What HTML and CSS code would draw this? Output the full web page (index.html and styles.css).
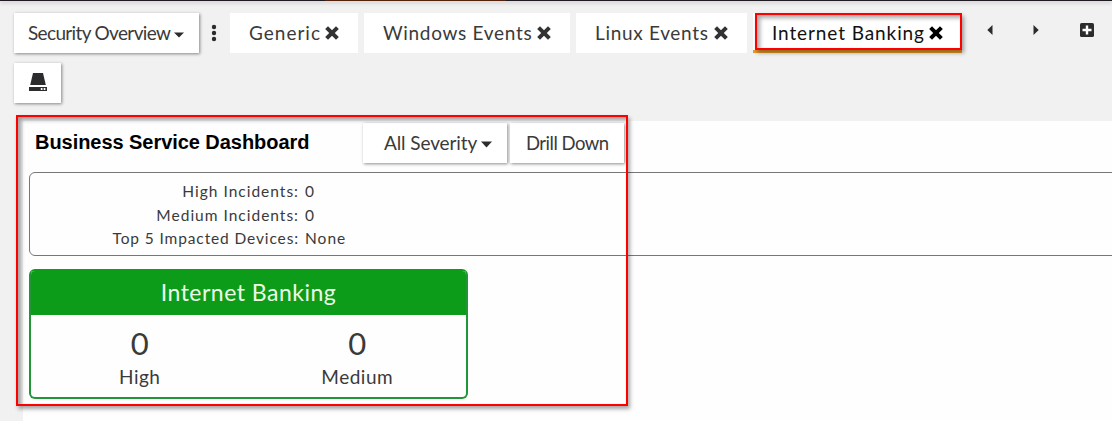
FILE: index.html
```html
<!DOCTYPE html>
<html lang="en">
<head>
<meta charset="utf-8">
<title>Business Service Dashboard</title>
<link rel="stylesheet" href="styles.css">
</head>
<body>
<div class="topbar"></div>
<nav class="toolbar">
  <button class="btn selector"><span class="selector-text">Security Overview</span><svg class="caret" width="10" height="6" viewBox="0 0 10 6"><path d="M0 .5h10L5 5.5z"/></svg></button>
  <svg class="dots" width="6" height="18" viewBox="0 0 6 18"><circle cx="3" cy="3" r="2.2"/><circle cx="3" cy="9" r="2.2"/><circle cx="3" cy="15" r="2.2"/></svg>
  <div class="tab tab-generic"><span class="tab-text">Generic</span><svg class="close" width="14" height="14" viewBox="0 0 14 14"><path d="M1.6 1.6l10.8 10.8M12.4 1.6L1.6 12.4"/></svg></div>
  <div class="tab tab-windows"><span class="tab-text">Windows Events</span><svg class="close" width="14" height="14" viewBox="0 0 14 14"><path d="M1.6 1.6l10.8 10.8M12.4 1.6L1.6 12.4"/></svg></div>
  <div class="tab tab-linux"><span class="tab-text">Linux Events</span><svg class="close" width="14" height="14" viewBox="0 0 14 14"><path d="M1.6 1.6l10.8 10.8M12.4 1.6L1.6 12.4"/></svg></div>
  <div class="tab tab-banking"><span class="tab-text">Internet Banking</span><svg class="close" width="14" height="14" viewBox="0 0 14 14"><path d="M1.6 1.6l10.8 10.8M12.4 1.6L1.6 12.4"/></svg><div class="mark mark-tab"></div></div>
  <div class="pager">
    <svg width="6" height="10" viewBox="0 0 6 10"><path d="M5.5 0v10L.3 5z"/></svg>
    <svg width="6" height="10" viewBox="0 0 6 10"><path d="M.5 0v10l5.2-5z"/></svg>
    <svg class="add" width="14" height="14" viewBox="0 0 14 14"><rect width="14" height="14" rx="1.6"/><path class="plus" d="M7 2.5v9M2.5 7h9"/></svg>
  </div>
</nav>
<button class="btn drive"><svg width="18" height="18" viewBox="0 0 18 18"><path d="M4 0h10l2.8 12H1.2z"/><path fill-rule="evenodd" d="M0 14h18v4H0zM11.8 15v2h1.7v-2zM14.7 15v2h1.7v-2z"/></svg></button>
<main class="panel">
  <header class="panel-head">
    <h1 class="title">Business Service Dashboard</h1>
    <button class="btn severity"><span class="severity-text">All Severity</span><svg class="caret" width="11" height="7" viewBox="0 0 11 7"><path d="M0 .5h11L5.5 6.5z"/></svg></button>
    <button class="btn drill"><span class="drill-text">Drill Down</span></button>
  </header>
  <dl class="summary">
    <dt>High Incidents:</dt><dd>0</dd>
    <dt>Medium Incidents:</dt><dd>0</dd>
    <dt class="devices">Top 5 Impacted Devices:</dt><dd>None</dd>
  </dl>
  <section class="card">
    <h2 class="card-title"><span class="card-name">Internet Banking</span></h2>
    <div class="counts">
      <div class="count"><div class="num">0</div><div class="label">High</div></div>
      <div class="count"><div class="num">0</div><div class="label">Medium</div></div>
    </div>
  </section>
</main>
<div class="mark mark-panel"></div>
</body>
</html>
```
FILE: styles.css
```css
* { box-sizing: border-box; }
body {
  margin: 0;
  width: 1112px;
  height: 421px;
  overflow: hidden;
  position: relative;
  background: #f1f1f1;
  color: #3a3a3a;
  font-family: Lato, sans-serif;
}
svg { flex: none; fill: #2c2c2e; }
.topbar {
  height: 1px;
  background: linear-gradient(90deg, #201a22 325px, #54210a 325px, #54210a 506px, #201a22 506px);
  box-shadow: 0 1px 4px rgba(0, 0, 0, .45);
}
.toolbar {
  display: flex;
  height: 40px;
  margin-top: 12px;
  padding-left: 14px;
}
.btn {
  display: flex;
  align-items: center;
  height: 40px;
  padding: 0 0 1px;
  border: 0;
  background: #fff;
  color: #3a3a3a;
  font: 19px Lato, sans-serif;
  white-space: nowrap;
  box-shadow: 1px 1px 3px rgba(0, 0, 0, .45);
}
.selector { width: 185px; padding-left: 14px; }
.selector-text { letter-spacing: -.65px; }
.caret { margin: 4px 0 0 4px; }
.dots { margin: 11px 13px 0 12px; }
.tab {
  display: flex;
  align-items: center;
  position: relative;
  background: #fff;
  padding: 0 0 1px 19px;
  font-size: 19px;
  letter-spacing: 1px;
  white-space: nowrap;
}
.close { margin-left: 4px; fill: none; stroke: #333; stroke-width: 4; }
.tab-generic { width: 128px; }
.tab-windows { width: 206px; margin-left: 6px; letter-spacing: .7px; }
.tab-windows .close { margin-left: 5px; }
.tab-linux { width: 171px; margin-left: 6px; letter-spacing: .68px; }
.tab-linux .close { margin-left: 5px; }
.tab-banking {
  width: 209px;
  margin-left: 6px;
  border-bottom: 3px solid #e89b28;
  color: #111;
  padding-top: 3px;
  letter-spacing: .9px;
}
.tab-banking .close { stroke: #000; margin-left: 4px; }
.mark {
  position: absolute;
  border: 2px solid #f00;
  box-shadow: 2px 3px 4px rgba(0, 0, 0, .35), inset 3px 3px 4px rgba(0, 0, 0, .34);
}
.mark-tab { left: 2px; top: 0; width: 207px; height: 37px; }
.mark-panel { left: 16px; top: 115px; width: 612px; height: 291px; }
.pager { display: flex; align-items: center; padding: 0 0 6px 25px; gap: 40px; }
.add { margin-left: 1px; }
.plus { fill: none; stroke: #fff; stroke-width: 2.4; }
.drive { width: 47px; margin: 10px 0 0 14px; justify-content: center; padding-bottom: 2px; }
.panel { margin: 18px 0 0 23px; height: 300px; background: #fefefe; }
.panel-head { display: flex; padding-top: 2px; }
.title {
  width: 340px;
  margin: 0;
  padding: 7px 0 0 12px;
  color: #000;
  font: bold 20px/24px "Liberation Sans", Arial, sans-serif;
  letter-spacing: -.05px;
  white-space: nowrap;
}
.severity { width: 144px; padding-left: 21px; }
.severity-text { letter-spacing: -.1px; }
.drill { width: 114px; margin-left: 3px; padding-left: 16px; }
.drill-text { font-size: 18.5px; letter-spacing: -.5px; }
.summary {
  display: grid;
  grid-template-columns: 269px auto;
  grid-auto-rows: 23.5px;
  column-gap: 6px;
  width: 1130px;
  height: 84px;
  margin: 9px 0 0 6px;
  padding-top: 7px;
  border: 1px solid #777;
  border-radius: 6px;
  font-size: 15.5px;
  line-height: 23px;
  letter-spacing: 1px;
}
.summary dt { text-align: right; }
.summary .devices { letter-spacing: .88px; }
.summary dd { margin: 0; }
.card {
  width: 439px;
  height: 130px;
  margin: 13px 0 0 6px;
  border: 2px solid #209637;
  border-top-color: #0d9b1a;
  border-radius: 6px;
  overflow: hidden;
}
.card-title {
  margin: 0;
  height: 44px;
  background: #0d9b1a;
  color: #ecfbe8;
  font-size: 23px;
  font-weight: 400;
  line-height: 43px;
  text-align: center;
  letter-spacing: .5px;
}
.counts { display: grid; grid-template-columns: 1fr 1fr; text-align: center; padding-top: 10px; }
.num { font-size: 31px; line-height: 36px; }
.label { font-size: 19px; line-height: 32px; letter-spacing: .5px; }
```
